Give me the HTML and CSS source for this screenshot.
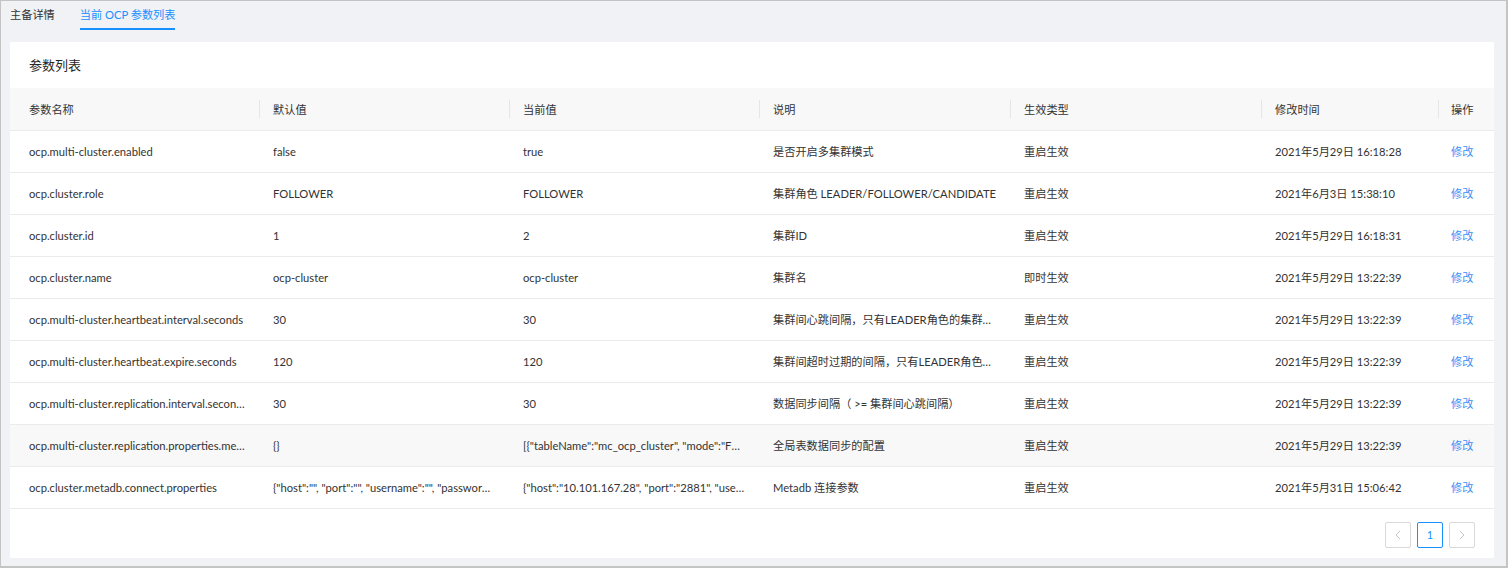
FILE: index.html
```html
<!DOCTYPE html>
<html lang="zh-CN">
<head>
  <meta charset="UTF-8">
  <title>OCP 参数列表</title>
  <link rel="stylesheet" href="styles.css">
</head>
<body>
  <div class="page">
    <div class="tabs">
      <div class="tab">主备详情</div>
      <div class="tab active">当前 OCP 参数列表</div>
    </div>

    <div class="card">
      <div class="card-title">参数列表</div>
      <table class="param-table">
        <colgroup>
          <col style="width:249px">
          <col style="width:250px">
          <col style="width:250px">
          <col style="width:251px">
          <col style="width:251px">
          <col style="width:177px">
          <col style="width:56px">
        </colgroup>
        <thead>
          <tr>
            <th>参数名称</th>
            <th>默认值</th>
            <th>当前值</th>
            <th>说明</th>
            <th>生效类型</th>
            <th>修改时间</th>
            <th>操作</th>
          </tr>
        </thead>
        <tbody>
          <tr>
            <td>ocp.multi-cluster.enabled</td>
            <td>false</td>
            <td>true</td>
            <td>是否开启多集群模式</td>
            <td>重启生效</td>
            <td>2021年5月29日 16:18:28</td>
            <td><a class="link" href="#">修改</a></td>
          </tr>
          <tr>
            <td>ocp.cluster.role</td>
            <td>FOLLOWER</td>
            <td>FOLLOWER</td>
            <td>集群角色 LEADER/FOLLOWER/CANDIDATE</td>
            <td>重启生效</td>
            <td>2021年6月3日 15:38:10</td>
            <td><a class="link" href="#">修改</a></td>
          </tr>
          <tr>
            <td>ocp.cluster.id</td>
            <td>1</td>
            <td>2</td>
            <td>集群ID</td>
            <td>重启生效</td>
            <td>2021年5月29日 16:18:31</td>
            <td><a class="link" href="#">修改</a></td>
          </tr>
          <tr>
            <td>ocp.cluster.name</td>
            <td>ocp-cluster</td>
            <td>ocp-cluster</td>
            <td>集群名</td>
            <td>即时生效</td>
            <td>2021年5月29日 13:22:39</td>
            <td><a class="link" href="#">修改</a></td>
          </tr>
          <tr>
            <td>ocp.multi-cluster.heartbeat.interval.seconds</td>
            <td>30</td>
            <td>30</td>
            <td>集群间心跳间隔，只有LEADER角色的集群会发送心跳</td>
            <td>重启生效</td>
            <td>2021年5月29日 13:22:39</td>
            <td><a class="link" href="#">修改</a></td>
          </tr>
          <tr>
            <td>ocp.multi-cluster.heartbeat.expire.seconds</td>
            <td>120</td>
            <td>120</td>
            <td>集群间超时过期的间隔，只有LEADER角色的集群会检查</td>
            <td>重启生效</td>
            <td>2021年5月29日 13:22:39</td>
            <td><a class="link" href="#">修改</a></td>
          </tr>
          <tr>
            <td>ocp.multi-cluster.replication.interval.seconds</td>
            <td>30</td>
            <td>30</td>
            <td>数据同步间隔（ &gt;= 集群间心跳间隔）</td>
            <td>重启生效</td>
            <td>2021年5月29日 13:22:39</td>
            <td><a class="link" href="#">修改</a></td>
          </tr>
          <tr class="hover">
            <td>ocp.multi-cluster.replication.properties.meta</td>
            <td>{}</td>
            <td>[{"tableName":"mc_ocp_cluster", "mode":"FULL"}]</td>
            <td>全局表数据同步的配置</td>
            <td>重启生效</td>
            <td>2021年5月29日 13:22:39</td>
            <td><a class="link" href="#">修改</a></td>
          </tr>
          <tr>
            <td>ocp.cluster.metadb.connect.properties</td>
            <td>{"host":"", "port":"", "username":"", "password":""}</td>
            <td>{"host":"10.101.167.28", "port":"2881", "username":"root"}</td>
            <td>Metadb 连接参数</td>
            <td>重启生效</td>
            <td>2021年5月31日 15:06:42</td>
            <td><a class="link" href="#">修改</a></td>
          </tr>
        </tbody>
      </table>

      <div class="pagination">
        <span class="page-btn">
          <svg width="8" height="10" viewBox="0 0 8 10"><path d="M6 1 L2 5 L6 9" fill="none" stroke="#c4c4c4" stroke-width="1"/></svg>
        </span>
        <span class="page-btn current">1</span>
        <span class="page-btn">
          <svg width="8" height="10" viewBox="0 0 8 10"><path d="M2 1 L6 5 L2 9" fill="none" stroke="#c4c4c4" stroke-width="1"/></svg>
        </span>
      </div>
    </div>
  </div>
</body>
</html>
```

FILE: styles.css
```css
* {
  box-sizing: border-box;
}
html, body {
  margin: 0;
  height: 100%;
}
body {
  font-family: Lato, "Noto Sans CJK SC", sans-serif;
  font-size: 11.2px;
  color: #333;
}
.page {
  height: 568px;
  background-color: #f0f2f5;
  border: 1px solid #c4c4c4;
  border-right-width: 2px;
  border-bottom-width: 2px;
  padding: 0 10px 0 9px;
}
.tabs {
  display: flex;
  gap: 25px;
  height: 41px;
}
.tab {
  height: 29px;
  line-height: 27px;
  font-size: 11.2px;
  color: #333;
  border-bottom: 2px solid transparent;
}
.tab.active {
  color: #1890ff;
  border-bottom-color: #1890ff;
}
.card {
  background-color: white;
  width: 1484px;
  height: 516px;
}
.card-title {
  height: 46px;
  line-height: 46px;
  padding-left: 19px;
  font-size: 13px;
  color: #262626;
}
.param-table {
  width: 1484px;
  border-collapse: collapse;
  table-layout: fixed;
}
.param-table th,
.param-table td {
  height: 42px;
  padding: 0 14px;
  text-align: left;
  font-weight: normal;
  white-space: nowrap;
  overflow: hidden;
  text-overflow: ellipsis;
  border-bottom: 1px solid #ebebeb;
}
.param-table th:first-child,
.param-table td:first-child {
  padding-left: 19px;
}
.param-table th:last-child,
.param-table td:last-child {
  padding-left: 13px;
  padding-right: 0;
}
.param-table th {
  position: relative;
  background-color: #f8f8f8;
  color: #333;
}
.param-table th + th::before {
  content: "";
  position: absolute;
  left: 0;
  top: 12px;
  height: 18px;
  width: 1px;
  background-color: #e6e6e6;
}
.param-table tr.hover td {
  background-color: #f8f8f8;
}
.link {
  color: #3c8ff5;
  text-decoration: none;
}
.pagination {
  display: flex;
  justify-content: flex-end;
  gap: 6px;
  padding: 13px 19px 0 0;
}
.page-btn {
  display: flex;
  align-items: center;
  justify-content: center;
  width: 26px;
  height: 26px;
  border: 1px solid #d9d9d9;
  border-radius: 2px;
  font-size: 11px;
  color: #333;
}
.page-btn.current {
  border-color: #1890ff;
  color: #1890ff;
}
```
